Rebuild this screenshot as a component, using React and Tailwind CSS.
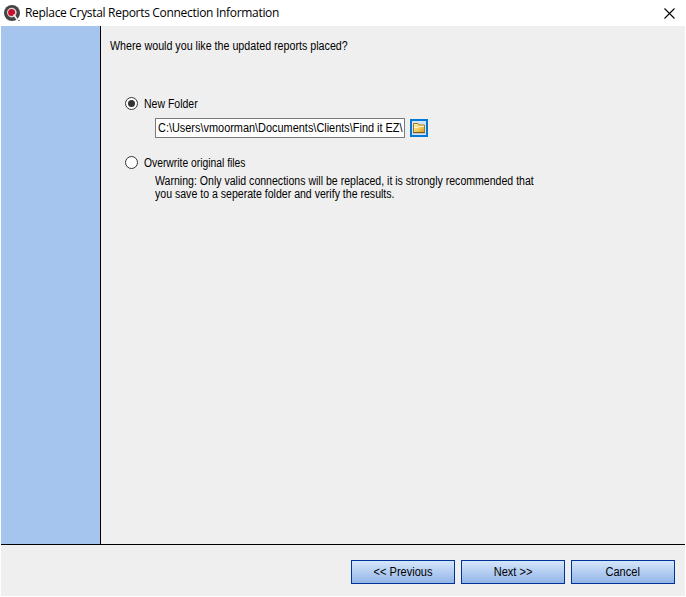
import { useState } from 'react';

const FOLDER = 'C:\\Users\\vmoorman\\Documents\\Clients\\Find it EZ\\';

function AppLogo() {
  return (
    <svg width="17" height="17" viewBox="0 0 17 17" className="shrink-0">
      <circle cx="8" cy="8" r="8" fill="#454346" />
      <circle cx="7.8" cy="7.6" r="4.8" fill="#dcd8d9" />
      <circle cx="7.6" cy="7.4" r="3.5" fill="#c8102e" />
      <path d="M9.6 9.6L13.6 15" stroke="#f1eeee" strokeWidth="1.7" />
      <path d="M14 15.5h2" stroke="#8a888a" />
    </svg>
  );
}

function FolderIcon() {
  return (
    <svg width="14" height="14" viewBox="0 0 14 14" className="shrink-0">
      <defs>
        <linearGradient id="folder" x1="0" y1="0" x2="1" y2="1">
          <stop offset="0" stopColor="#fff3b0" />
          <stop offset="0.5" stopColor="#f3cf62" />
          <stop offset="1" stopColor="#d39a1c" />
        </linearGradient>
      </defs>
      <path d="M1.5 11.5v-9h4.5l1 1.5h5.5v7.5z" fill="url(#folder)" stroke="#9a7a2c" />
      <path d="M2 6.5h4l1-1.2h5" stroke="#fffbe0" fill="none" />
      <path d="M1 11.7h12" stroke="#6f561c" />
    </svg>
  );
}

function Radio({ checked, onClick }) {
  return (
    <button
      role="radio"
      aria-checked={checked}
      onClick={onClick}
      className="flex size-[13px] shrink-0 items-center justify-center rounded-full border border-[#333333] bg-white"
    >
      {checked && <span className="size-[7px] rounded-full bg-[#333333]" />}
    </button>
  );
}

function WizardButton({ children }) {
  return (
    <button className="h-6 w-[104px] border border-[#003399] bg-linear-to-b from-[#d5e6fa] to-[#93b5e8] pt-px text-center">
      <span className="inline-block scale-x-[0.92]">{children}</span>
    </button>
  );
}

export default function App() {
  const [target, setTarget] = useState('new');

  return (
    <div className="h-[597px] w-[686px] overflow-hidden bg-white pr-px pb-px pl-px font-['Liberation_Sans',Arial,sans-serif] text-[12px] leading-[13px] whitespace-nowrap text-black">
      {/* Title bar */}
      <div className="flex h-[26px] items-center pr-[10px] pl-[3px]">
        <AppLogo />
        <span className="ml-1 pb-px font-['Open_Sans','Noto_Sans',sans-serif] text-[12px] tracking-[-0.31px]">
          Replace Crystal Reports Connection Information
        </span>
        <button className="ml-auto">
          <svg width="11" height="11" viewBox="0 0 11 11" stroke="#000" strokeWidth="1.1">
            <path d="M0.5 0.5l10 10M10.5 0.5l-10 10" />
          </svg>
        </button>
      </div>

      <div className="flex h-[519px] border-b border-black bg-[#efefef]">
        <div className="w-[100px] shrink-0 border-r border-black bg-[#a5c4ee]" />
        <div className="pt-[14px] pl-[9px]">
          <p className="w-max origin-left scale-x-[0.891]">Where would you like the updated reports placed?</p>

          <div className="mt-[44px] pl-[15px]">
            <div className="flex h-[13px] items-center gap-[6px]">
              <Radio checked={target === 'new'} onClick={() => setTarget('new')} />
              <span className="origin-left scale-x-[0.875] pt-px">New Folder</span>
            </div>
            <div className="mt-2 flex items-center gap-[5px] pl-[30px]">
              <div className="h-5 w-[250px] border border-[#7a7a7a] bg-white px-[2px] pt-[3px]">
                <div className="w-max origin-left scale-x-[0.91]">{FOLDER}</div>
              </div>
              <button className="flex size-[18px] items-center justify-center border-2 border-[#0078d7] bg-[#d3e2f5]">
                <FolderIcon />
              </button>
            </div>

            <div className="mt-[18px] flex h-[13px] items-center gap-[6px]">
              <Radio checked={target === 'overwrite'} onClick={() => setTarget('overwrite')} />
              <span className="origin-left scale-x-[0.86] pt-px">Overwrite original files</span>
            </div>
            <p className="mt-[6px] ml-[30px] w-max origin-left scale-x-[0.88]">
              Warning: Only valid connections will be replaced, it is strongly recommended that
              <br />
              you save to a seperate folder and verify the results.
            </p>
          </div>
        </div>
      </div>

      {/* Wizard navigation */}
      <div className="flex h-[51px] justify-end gap-[6px] bg-[#efefef] pt-[15px] pr-[10px]">
        <WizardButton>&lt;&lt; Previous</WizardButton>
        <WizardButton>Next &gt;&gt;</WizardButton>
        <WizardButton>Cancel</WizardButton>
      </div>
    </div>
  );
}
